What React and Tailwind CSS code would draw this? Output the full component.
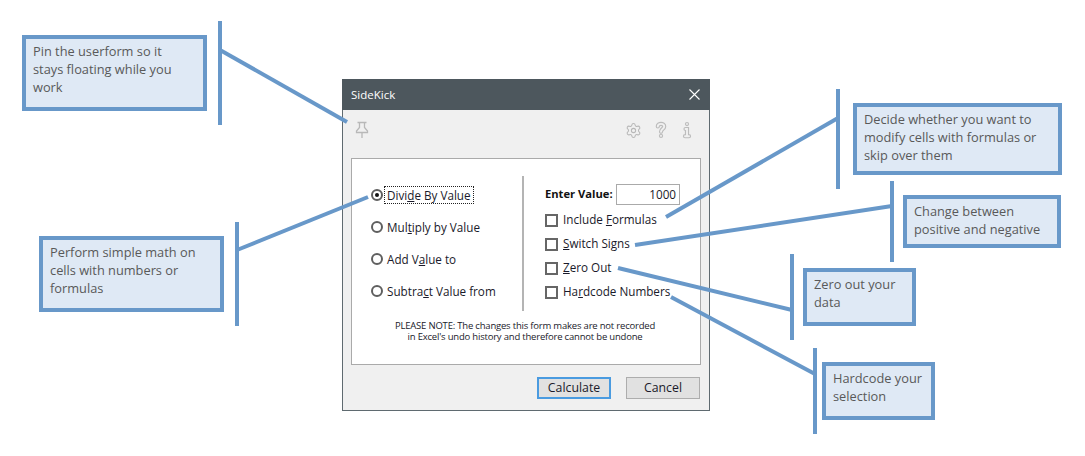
import { Settings } from 'lucide-react'

const FONT = "font-['Open_Sans','Noto_Sans',sans-serif]"

const CALLOUTS = [
  { box: 'left-[22px] top-[35px] w-[185px] h-[76px]', lines: ['Pin the userform so it', 'stays floating while you', 'work'] },
  { box: 'left-[39px] top-[236px] w-[185px] h-[76px]', lines: ['Perform simple math on', 'cells with numbers or', 'formulas'] },
  { box: 'left-[853px] top-[103px] w-[209px] h-[72px]', lines: ['Decide whether you want to', 'modify cells with formulas or', 'skip over them'] },
  { box: 'left-[903px] top-[195px] w-[158px] h-[53px]', lines: ['Change between', 'positive and negative'] },
  { box: 'left-[803px] top-[268px] w-[113px] h-[58px]', lines: ['Zero out your', 'data'] },
  { box: 'left-[822px] top-[362px] w-[113px] h-[58px]', lines: ['Hardcode your', 'selection'] },
]

// [x1, y1, x2, y2]
const LEADERS = [
  [220, 21, 220, 125],
  [220, 50, 347, 122],
  [237, 222, 237, 326],
  [237, 250, 368, 197],
  [838, 89, 838, 189],
  [838, 118, 666, 217],
  [892, 181, 892, 262],
  [892, 206, 635, 245],
  [792, 254, 792, 340],
  [792, 310, 618, 268],
  [815, 348, 815, 434],
  [815, 374, 671, 297],
]

function Callout({ box, lines }) {
  return (
    <div className={`absolute ${box} border-[4px] border-[#6898c9] bg-[#dfe9f5] pl-[7px] pt-[3px] text-[12.800px] leading-[18px] text-[#595959]`}>
      {lines.map((l) => (
        <div key={l} className="whitespace-nowrap">{l}</div>
      ))}
    </div>
  )
}

function PinIcon() {
  return (
    <svg width="16" height="18" viewBox="0 0 16 18" fill="none" stroke="#b8b8b8" strokeWidth="1.300">
      <path d="M3.500 1.500h9M5.500 1.500v5L2.500 10v1.500h11V10l-3-3.500v-5M8 11.500V17" />
    </svg>
  )
}

function QuestionIcon() {
  const d = 'M4.800 5.500C4.800 2 11.200 2 11.200 5.500C11.200 8 8 8 8 10.800M8 14.800v.1'
  return (
    <svg width="16" height="18" viewBox="0 0 16 18" fill="none" strokeLinecap="round">
      <path d={d} stroke="#bcbcbc" strokeWidth="4.200" />
      <path d={d} stroke="#f0f0f0" strokeWidth="1.900" />
    </svg>
  )
}

function InfoIcon() {
  const d = 'M8 3v.1M6.500 8H8v7M6 15.200h4'
  return (
    <svg width="16" height="18" viewBox="0 0 16 18" fill="none" strokeLinecap="round">
      <path d={d} stroke="#bcbcbc" strokeWidth="4.200" />
      <path d={d} stroke="#f0f0f0" strokeWidth="1.900" />
    </svg>
  )
}

function Radio({ checked, focused, children }) {
  return (
    <div className="flex items-center h-[18px]">
      <span className="flex items-center justify-center w-[12px] h-[12px] rounded-full border-2 border-[#5f5f5f] bg-white shrink-0">
        {checked && <span className="w-[4px] h-[4px] rounded-full bg-[#111]" />}
      </span>
      <span className={`ml-[1px] px-[2px] h-[18px] leading-[17px] whitespace-nowrap border border-dotted ${focused ? 'border-[#222]' : 'border-transparent'}`}>
        {children}
      </span>
    </div>
  )
}

function Check({ children }) {
  return (
    <div className="flex items-center h-[14px]">
      <span className="w-[13px] h-[13px] border-2 border-[#666] bg-white shrink-0" />
      <span className="ml-[5px] whitespace-nowrap">{children}</span>
    </div>
  )
}

function Dialog() {
  return (
    <div className={`absolute left-[342px] top-[79px] w-[368px] h-[332px] flex flex-col border border-[#5f6a70] bg-[#f0f0f0] text-[11.700px] text-[#1a1a2a] ${FONT}`}>
      <div className="flex items-center justify-between h-[31px] -mt-px -mx-px bg-[#4d575d] pl-[9px] pr-[10px] text-[11.500px] text-white shrink-0">
        <span>SideKick</span>
        <svg width="11" height="11" viewBox="0 0 11 11" stroke="#fff" strokeWidth="1.100">
          <path d="M.5.500l10 10M10.500.500l-10 10" />
        </svg>
      </div>

      <div className="flex items-center h-[48px] pb-[8px] pl-[11px] pr-[14px] shrink-0">
        <PinIcon />
        <div className="ml-auto flex items-center gap-[10px]">
          <Settings size={17} color="#b8b8b8" strokeWidth={1.500} className="mr-[1px]" />
          <QuestionIcon />
          <InfoIcon />
        </div>
      </div>

      <div className="mx-[8px] h-[207px] border border-[#aaaaaa] bg-white flex flex-col shrink-0">
        <div className="flex h-[135px] mt-[17px]">
          <div className="w-[170px] pl-[19px] pt-[10px] flex flex-col gap-[14px]">
            <Radio checked focused>Divi<u>d</u>e By Value</Radio>
            <Radio>Mul<u>t</u>iply by Value</Radio>
            <Radio>Add V<u>a</u>lue to</Radio>
            <Radio>Subtra<u>c</u>t Value from</Radio>
          </div>
          <div className="w-[2px] bg-[#b4b4b4] shrink-0" />
          <div className="pl-[21px] pt-[8px] flex flex-col">
            <div className="flex items-center h-[21px]">
              <span className="font-bold text-[11.200px] text-[#111] w-[71px] whitespace-nowrap">Enter Value:</span>
              <span className="w-[64px] h-[21px] border border-[#aaaaaa] text-right pr-[3px] leading-[19px]">1000</span>
            </div>
            <div className="flex flex-col gap-[10px] mt-[8px]">
              <Check>Include <u>F</u>ormulas</Check>
              <Check><u>S</u>witch Signs</Check>
              <Check><u>Z</u>ero Out</Check>
              <Check>Ha<u>r</u>dcode Numbers</Check>
            </div>
          </div>
        </div>
        <div className="mt-[9px] text-center text-[9.500px] leading-[11px] pr-[2px] tracking-[-0.2px]">
          <div>PLEASE NOTE: The changes this form makes are not recorded</div>
          <div>in Excel's undo history and therefore cannot be undone</div>
        </div>
      </div>

      <div className="flex justify-end gap-[15px] mt-[12px] mr-[9px]">
        <div className="w-[74px] h-[22px] border-2 border-[#4a9be0] bg-[#e1e1e1] flex items-center justify-center text-[12.300px]">Calculate</div>
        <div className="w-[74px] h-[22px] border border-[#adadad] bg-[#e1e1e1] flex items-center justify-center text-[12.300px]">Cancel</div>
      </div>
    </div>
  )
}

export default function App() {
  return (
    <div className={`relative w-[1085px] h-[456px] overflow-hidden bg-white ${FONT}`}>
      <Dialog />
      {CALLOUTS.map((c) => (
        <Callout key={c.box} {...c} />
      ))}
      <svg className="absolute inset-0 pointer-events-none" width="1085" height="456">
        {LEADERS.map(([x1, y1, x2, y2]) => (
          <line key={`${x1}-${y1}-${x2}`} x1={x1} y1={y1} x2={x2} y2={y2} stroke="#6898c9" strokeWidth="4" />
        ))}
      </svg>
    </div>
  )
}
